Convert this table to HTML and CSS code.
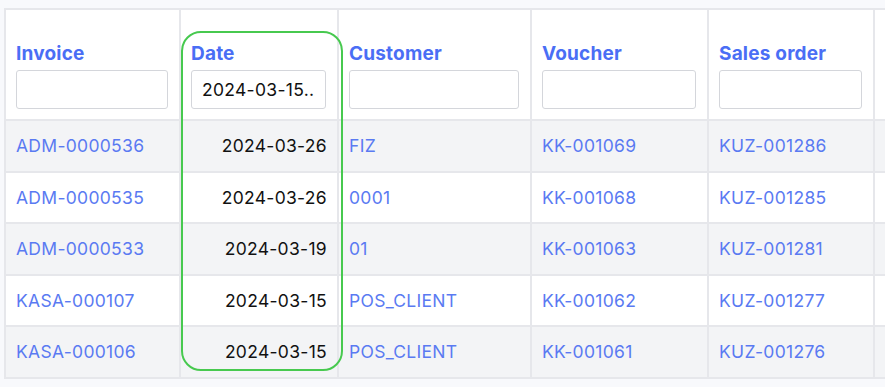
FILE: index.html
```html
<!DOCTYPE html>
<html>
<head>
<meta charset="utf-8">
<link rel="stylesheet" href="styles.css">
</head>
<body>
<div class="wrap">
  <table class="grid">
    <colgroup>
      <col class="c-inv"><col class="c-date"><col class="c-cust"><col class="c-vch"><col class="c-so"><col class="c-more">
    </colgroup>
    <thead>
      <tr>
        <th><div class="label">Invoice</div><input class="filter" type="text" value=""></th>
        <th><div class="label">Date</div><input class="filter" type="text" value="2024-03-15..2024-03-26"></th>
        <th><div class="label">Customer</div><input class="filter" type="text" value=""></th>
        <th><div class="label">Voucher</div><input class="filter" type="text" value=""></th>
        <th><div class="label">Sales order</div><input class="filter" type="text" value=""></th>
        <th></th>
      </tr>
    </thead>
    <tbody>
      <tr class="odd"><td><a>ADM-0000536</a></td><td class="num">2024-03-26</td><td><a>FIZ</a></td><td><a>KK-001069</a></td><td><a>KUZ-001286</a></td><td></td></tr>
      <tr><td><a>ADM-0000535</a></td><td class="num">2024-03-26</td><td><a>0001</a></td><td><a>KK-001068</a></td><td><a>KUZ-001285</a></td><td></td></tr>
      <tr class="odd"><td><a>ADM-0000533</a></td><td class="num">2024-03-19</td><td><a>01</a></td><td><a>KK-001063</a></td><td><a>KUZ-001281</a></td><td></td></tr>
      <tr><td><a>KASA-000107</a></td><td class="num">2024-03-15</td><td><a>POS_CLIENT</a></td><td><a>KK-001062</a></td><td><a>KUZ-001277</a></td><td></td></tr>
      <tr class="odd"><td><a>KASA-000106</a></td><td class="num">2024-03-15</td><td><a>POS_CLIENT</a></td><td><a>KK-001061</a></td><td><a>KUZ-001276</a></td><td></td></tr>
    </tbody>
  </table>
  <div class="highlight"></div>
</div>
</body>
</html>
```
FILE: styles.css
```css
html, body {
  margin: 0;
  padding: 0;
  background: #f8f9fc;
  overflow: hidden;
  font-family: Inter, "Noto Sans", sans-serif;
}
.wrap {
  position: relative;
  padding: 8px 0 0 4px;
  width: 1000px;
}
.grid {
  border-collapse: collapse;
  table-layout: fixed;
  width: 945px;
  background: #fff;
  border: 2px solid #e6e7eb;
}
.c-inv { width: 175px; }
.c-date { width: 158px; }
.c-cust { width: 193px; }
.c-vch { width: 177px; }
.c-so { width: 166px; }
.c-more { width: 76px; }
.grid th, .grid td {
  border: 2px solid #e6e7eb;
  text-align: left;
  padding: 0 10px 0 10px;
}
.grid th {
  height: 99px;
  vertical-align: bottom;
  padding-bottom: 10px;
  background: #fff;
}
.label {
  color: #4a6ef5;
  font-weight: 700;
  font-size: 19px;
  letter-spacing: 0.2px;
  line-height: 22px;
  margin-bottom: 5px;
}
.filter {
  display: block;
  box-sizing: border-box;
  width: calc(100% - 1px);
  height: 39px;
  border: 1.5px solid #d4d6db;
  border-radius: 3px;
  padding: 0 10px;
  font-family: Inter, "Noto Sans", sans-serif;
  font-size: 17.5px;
  letter-spacing: 0.3px;
  color: #111;
  background: #fff;
  margin: 0;
}
.grid td {
  height: 49.5px;
  font-size: 17.5px;
  color: #1a1a1a;
  letter-spacing: 0.3px;
}
.grid tr.odd td { background: #f3f4f6; }
.grid td a { color: #5a7af2; }
.grid td.num { text-align: right; color: #111; }
.highlight {
  position: absolute;
  left: 181px;
  top: 31px;
  width: 158px;
  height: 336px;
  border: 2px solid #47c94f;
  border-radius: 20px;
  pointer-events: none;
}
```
